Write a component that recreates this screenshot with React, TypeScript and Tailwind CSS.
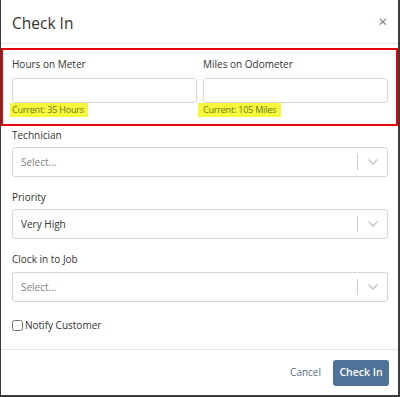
import { useState } from 'react'

function Chevron() {
  return (
    <svg width="12" height="8" viewBox="0 0 12 8" fill="none" stroke="#c4c4c4" strokeWidth={1.3}>
      <path d="M1.5 1.5L6 6l4.5-4.5" />
    </svg>
  )
}

function SelectBox({ value, placeholder }: { value?: string; placeholder: string }) {
  return (
    <div className="flex items-center h-[30px] border border-[#d6d6d6] rounded-[3px] bg-white">
      <span className={`flex-1 pl-[8px] text-[10px] ${value ? 'text-[#333]' : 'text-[#808080]'}`}>
        {value ?? placeholder}
      </span>
      <span className="w-px h-[16px] bg-[#cfcfcf]" />
      <span className="w-[29px] flex justify-center">
        <Chevron />
      </span>
    </div>
  )
}

export default function App() {
  const [notify, setNotify] = useState(false)

  return (
    <div className="w-[400px] h-[397px] bg-[#3c3c3c] pl-px" style={{ fontFamily: '"Open Sans", sans-serif' }}>
      <div className="w-[397px] h-[395px] bg-white flex flex-col">
        {/* header */}
        <div className="h-[44px] flex items-center justify-between pl-[11px] pr-[11px] pt-[4px] border-b border-[#e5e5e5] shrink-0">
          <h1 className="text-[15.5px] text-[#333]">Check In</h1>
          <button type="button" className="text-[15px] leading-none text-[#777] -mt-[5px]">×</button>
        </div>

        {/* body */}
        <div className="flex-1 flex flex-col pt-[4px]">
          <div className="border-2 border-[#e8000d] h-[78px] flex gap-[6px] pl-[9px] pr-[8px] pt-[7px]">
            <div className="flex-1 flex flex-col">
              <label className="text-[10px] text-[#333] leading-[14px]">Hours on Meter</label>
              <div className="mt-[7px] h-[25px] border border-[#d6d6d6] rounded-[3px]" />
              <span className="self-start -ml-[2px] pl-[2px] pr-[4px] bg-[#f8f83a] text-[9px] tracking-[-0.2px] leading-[14px] text-[#667a1e]">
                Current: 35 Hours
              </span>
            </div>
            <div className="flex-1 flex flex-col">
              <label className="text-[10px] text-[#333] leading-[14px]">Miles on Odometer</label>
              <div className="mt-[7px] h-[25px] border border-[#d6d6d6] rounded-[3px]" />
              <span className="self-start -ml-[5px] px-[5px] bg-[#f8f83a] text-[9px] tracking-[-0.2px] leading-[14px] text-[#667a1e]">
                Current: 105 Miles
              </span>
            </div>
          </div>

          <div className="pl-[11px] pr-[10px] pt-[2px] flex flex-col">
            <label className="text-[10px] text-[#333] leading-[14px]">Technician</label>
            <div className="mt-[5px]"><SelectBox placeholder="Select..." /></div>

            <label className="mt-[13px] text-[10px] text-[#333] leading-[14px]">Priority</label>
            <div className="mt-[5px]"><SelectBox value="Very High" placeholder="Select..." /></div>

            <label className="mt-[13px] text-[10px] text-[#333] leading-[14px]">Clock in to Job</label>
            <div className="mt-[6px]"><SelectBox placeholder="Select..." /></div>

            <label className="mt-[16px] flex items-center gap-[2px] text-[10px] text-[#333] leading-[14px]">
              <input
                type="checkbox"
                checked={notify}
                onChange={e => setNotify(e.target.checked)}
                className="w-[11px] h-[11px] m-0"
              />
              Notify Customer
            </label>
          </div>
        </div>

        {/* footer */}
        <div className="h-[46px] border-t border-[#e5e5e5] flex items-center justify-end gap-[12px] pr-[9px] shrink-0">
          <button type="button" className="text-[10px] text-[#5a6f85]">Cancel</button>
          <button type="button" className="h-[26px] w-[56px] rounded-[3px] bg-[#4e7298] text-white text-[10.5px] font-semibold">
            Check In
          </button>
        </div>
      </div>
    </div>
  )
}
